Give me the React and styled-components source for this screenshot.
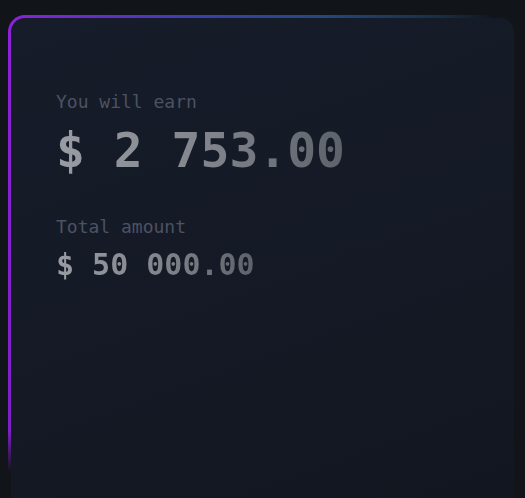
import React from 'react';
import styled, { createGlobalStyle } from 'styled-components';

const GlobalStyle = createGlobalStyle`
  html, body {
    margin: 0;
    padding: 0;
    background: #111419;
    height: 100%;
    overflow: hidden;
  }
`;

const Page = styled.div`
  padding: 15px 8px 0;
  min-height: 100vh;
  box-sizing: border-box;
  font-family: "DejaVu Sans Mono", "Liberation Mono", monospace;
`;

const Card = styled.div`
  box-sizing: border-box;
  height: 520px;
  padding: 72px 45px 0;
  border: 3px solid transparent;
  border-radius: 17px;
  background:
    linear-gradient(160deg, #161c29 0%, #141925 55%, #12161f 100%) padding-box,
    linear-gradient(to right, #8d22d8 0%, #6a2ccc 14%, #3a3fae 38%, #23497f 62%, rgba(30, 74, 110, 0.5) 85%, rgba(30, 74, 110, 0) 96%) top left / 100% 40px no-repeat border-box,
    linear-gradient(to bottom, #8d22d8 0%, #7d20c6 80%, rgba(110, 30, 180, 0) 88%) top left / 40px 100% no-repeat border-box;
`;

const Group = styled.div`
  display: flex;
  flex-direction: column;
  gap: 8px;
  margin-bottom: ${(p) => p.$space || 0}px;
`;

const Label = styled.div`
  font-size: 18px;
  line-height: 24px;
  color: #4c5263;
`;

const Amount = styled.div`
  font-weight: 700;
  font-size: ${(p) => p.$size}px;
  line-height: ${(p) => p.$lh}px;
  background: linear-gradient(to right, #9a9ca3 0%, #83868d 50%, #5d6169 100%);
  -webkit-background-clip: text;
  background-clip: text;
  color: transparent;
  width: fit-content;
`;

export default function App() {
  return (
    <>
      <GlobalStyle />
      <Page>
        <Card>
          <Group $space={37}>
            <Label>You will earn</Label>
            <Amount $size={48} $lh={56}>$ 2 753.00</Amount>
          </Group>
          <Group>
            <Label>Total amount</Label>
            <Amount $size={30} $lh={36}>$ 50 000.00</Amount>
          </Group>
        </Card>
      </Page>
    </>
  );
}
